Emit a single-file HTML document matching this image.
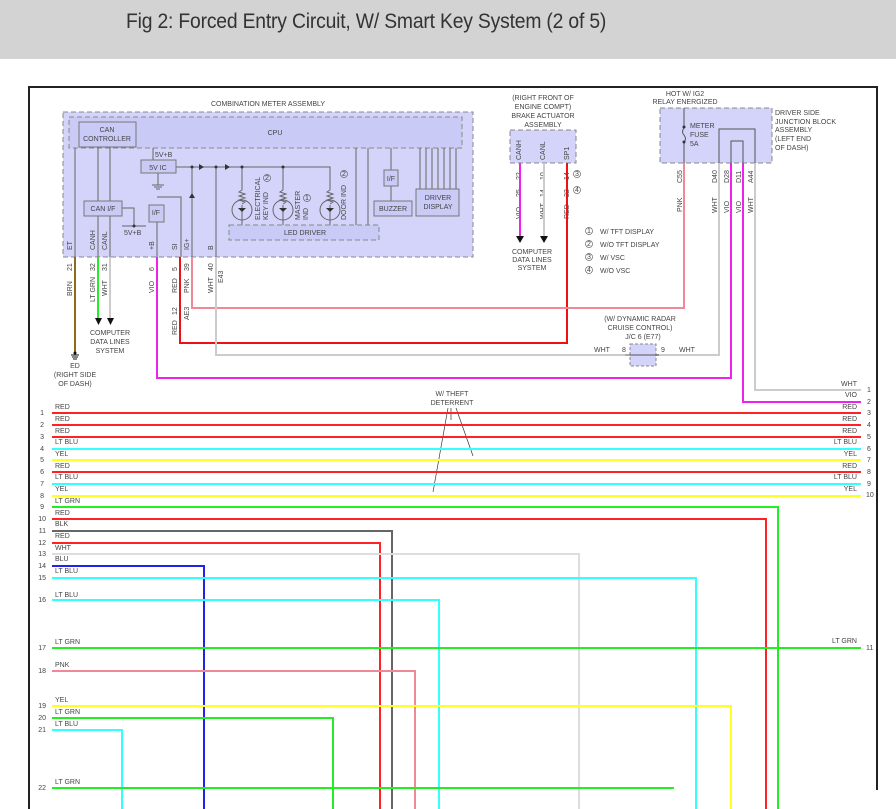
<!DOCTYPE html>
<html><head><meta charset="utf-8"><style>
html,body{margin:0;padding:0;background:#fff;width:896px;height:809px;overflow:hidden}
.hd{position:absolute;left:0;top:0;width:896px;height:59px;background:#d3d3d3}
.hd span{position:absolute;left:126px;top:10px;font-family:"Liberation Sans Narrow","Liberation Sans",sans-serif;font-size:21px;color:#333;letter-spacing:-0.2px;transform:scaleX(0.92);transform-origin:0 0;white-space:nowrap}
svg{position:absolute;left:0;top:0}
text{font-family:"Liberation Sans",sans-serif;font-size:7px;fill:#444}
</style></head><body>
<div class="hd"><span>Fig 2: Forced Entry Circuit, W/ Smart Key System (2 of 5)</span></div>
<svg width="896" height="809" viewBox="0 0 896 809">
<path d="M29 809V87H877V790" fill="none" stroke="#222" stroke-width="2"/>
<text x="268" y="106" text-anchor="middle">COMBINATION METER ASSEMBLY</text>
<rect x="63" y="112" width="410" height="145" fill="#d4d4fa" stroke="#888" stroke-dasharray="5,3"/>
<rect x="69" y="117" width="393" height="31" fill="#cacaf6" stroke="#888" stroke-dasharray="5,3"/>
<text x="275" y="135" text-anchor="middle">CPU</text>
<rect x="79" y="122" width="57" height="25" fill="#cacaf6" stroke="#777"/>
<text x="107" y="132" text-anchor="middle">CAN</text><text x="107" y="141" text-anchor="middle">CONTROLLER</text>
<rect x="510" y="130" width="66" height="33" fill="#d4d4fa" stroke="#888" stroke-dasharray="5,3"/>
<rect x="660" y="108" width="112" height="55" fill="#d4d4fa" stroke="#888" stroke-dasharray="5,3"/>
<g stroke="#666" fill="none" stroke-width="1">
<path d="M75 148V257M98 147V257M110 147V257"/>
<path d="M122 208H134V226M122 226H146"/>
<path d="M153 148V160M158 173V185M152 185h12M154 187h8M156 189h4"/>
<path d="M176 167H330V190M242 167V190M283 167V190"/>
<path d="M192 167V257M216 167V257"/>
<path d="M157 222V257M157 197H181V257"/>
<path d="M242 205V225M283 205V225M330 205V225"/>
<path d="M356 148V225M368 148V225"/>
<path d="M391 148V170M391 186V201"/>
<path d="M420 148V189M426 148V189M432 148V189M438 148V189M444 148V189M450 148V189M456 148V189"/>
<path d="M242 190l-3 2 6 2-6 2 6 2-6 2 6 2-3 2M283 190l-3 2 6 2-6 2 6 2-6 2 6 2-3 2M330 190l-3 2 6 2-6 2 6 2-6 2 6 2-3 2"/>
<circle cx="242" cy="210" r="10"/><circle cx="283" cy="210" r="10"/><circle cx="330" cy="210" r="10"/>
</g>
<g fill="#333"><circle cx="192" cy="167" r="1.5"/><circle cx="216" cy="167" r="1.5"/><circle cx="242" cy="167" r="1.5"/><circle cx="283" cy="167" r="1.5"/><circle cx="134" cy="226" r="1.5"/>
<path d="M199 164v6l5-3zM225 164v6l5-3zM189 198h6l-3-5z"/><path d="M238 208h8l-4 4zM279 208h8l-4 4zM326 208h8l-4 4z"/></g>
<rect x="141" y="160" width="35" height="13" fill="#cacaf6" stroke="#777"/><text x="158" y="170" text-anchor="middle">5V IC</text>
<text x="155" y="157">5V+B</text>
<rect x="84" y="201" width="38" height="15" fill="#cacaf6" stroke="#777"/><text x="103" y="211" text-anchor="middle">CAN I/F</text>
<text x="124" y="235">5V+B</text>
<rect x="149" y="205" width="15" height="17" fill="#cacaf6" stroke="#777"/><text x="156" y="215" text-anchor="middle">I/F</text>
<rect x="229" y="225" width="150" height="15" fill="#cacaf6" stroke="#888" stroke-dasharray="5,3"/><text x="305" y="235" text-anchor="middle">LED DRIVER</text>
<rect x="384" y="170" width="14" height="16" fill="#cacaf6" stroke="#777"/><text x="391" y="181" text-anchor="middle">I/F</text>
<rect x="374" y="201" width="38" height="15" fill="#cacaf6" stroke="#777"/><text x="393" y="211" text-anchor="middle">BUZZER</text>
<rect x="416" y="189" width="43" height="27" fill="#cacaf6" stroke="#777"/><text x="438" y="200" text-anchor="middle">DRIVER</text><text x="438" y="209" text-anchor="middle">DISPLAY</text>
<g transform="rotate(-90)">
<text x="-220" y="260">ELECTRICAL</text><text x="-220" y="268">KEY IND</text>
<text x="-220" y="300">MASTER</text><text x="-220" y="308">IND</text>
<text x="-220" y="346">DOOR IND</text>
<text x="-250" y="72">ET</text><text x="-250" y="95">CANH</text><text x="-250" y="107">CANL</text>
<text x="-250" y="154">+B</text><text x="-250" y="177">SI</text><text x="-250" y="189">IG+</text><text x="-250" y="213">B</text>
<text x="-271" y="72">21</text><text x="-271" y="95">32</text><text x="-271" y="107">31</text><text x="-271" y="154">6</text><text x="-271" y="177">5</text><text x="-271" y="189">39</text><text x="-271" y="213">40</text>
<text x="-296" y="72">BRN</text><text x="-302" y="95">LT GRN</text><text x="-296" y="107">WHT</text><text x="-293" y="154">VIO</text><text x="-293" y="177">RED</text><text x="-293" y="189">PNK</text><text x="-293" y="213">WHT</text>
<text x="-283" y="223">E43</text>
<text x="-335" y="177">RED</text><text x="-315" y="177">12</text><text x="-320" y="189">AE3</text>
<text x="-160" y="521">CANH</text><text x="-160" y="545">CANL</text><text x="-160" y="569">SP1</text>
<text x="-180" y="521">22</text><text x="-180" y="545">10</text><text x="-180" y="569">14</text>
<text x="-197" y="521">25</text><text x="-197" y="545">14</text><text x="-197" y="569">22</text>
<text x="-219" y="521">VIO</text><text x="-219" y="545">WHT</text><text x="-219" y="569">RED</text>
<text x="-183" y="682">C55</text><text x="-212" y="682">PNK</text>
<text x="-183" y="717">D40</text><text x="-183" y="729">D28</text><text x="-183" y="741">D11</text><text x="-183" y="753">A44</text>
<text x="-213" y="717">WHT</text><text x="-213" y="729">VIO</text><text x="-213" y="741">VIO</text><text x="-213" y="753">WHT</text>
</g>
<g fill="none" stroke="#666" stroke-width="0.7"><circle cx="267" cy="178" r="3.5"/><circle cx="307" cy="198" r="3.5"/><circle cx="344" cy="174" r="3.5"/></g>
<text x="265" y="180" font-size="5">2</text><text x="305" y="200" font-size="5">1</text><text x="342" y="176" font-size="5">2</text>
<text x="543" y="100" text-anchor="middle">(RIGHT FRONT OF</text><text x="543" y="109" text-anchor="middle">ENGINE COMPT)</text>
<text x="543" y="118" text-anchor="middle">BRAKE ACTUATOR</text><text x="543" y="127" text-anchor="middle">ASSEMBLY</text>
<text x="532" y="254" text-anchor="middle">COMPUTER</text><text x="532" y="262" text-anchor="middle">DATA LINES</text><text x="532" y="270" text-anchor="middle">SYSTEM</text>
<g fill="none" stroke="#666" stroke-width="0.7"><circle cx="577" cy="174" r="3.5"/><circle cx="577" cy="190" r="3.5"/>
<circle cx="589" cy="231" r="3.5"/><circle cx="589" cy="244" r="3.5"/><circle cx="589" cy="257" r="3.5"/><circle cx="589" cy="270" r="3.5"/></g>
<text x="575" y="176" font-size="5">3</text><text x="575" y="192" font-size="5">4</text>
<text x="587" y="233" font-size="5">1</text><text x="587" y="246" font-size="5">2</text><text x="587" y="259" font-size="5">3</text><text x="587" y="272" font-size="5">4</text>
<text x="600" y="234">W/ TFT DISPLAY</text><text x="600" y="247">W/O TFT DISPLAY</text><text x="600" y="260">W/ VSC</text><text x="600" y="273">W/O VSC</text>
<text x="685" y="96" text-anchor="middle">HOT W/ IG2</text><text x="685" y="104" text-anchor="middle">RELAY ENERGIZED</text>
<text x="775" y="115">DRIVER SIDE</text><text x="775" y="124">JUNCTION BLOCK</text><text x="775" y="132">ASSEMBLY</text><text x="775" y="141">(LEFT END</text><text x="775" y="150">OF DASH)</text>
<text x="690" y="128">METER</text><text x="690" y="137">FUSE</text><text x="690" y="146">5A</text>
<g fill="none" stroke="#555"><path d="M684 108V128q-3 4 0 7q3 4 0 7V163M719 163V129H755V163M731 163V141H743V163"/></g>
<circle cx="684" cy="127" r="1.5" fill="#333"/><circle cx="684" cy="142" r="1.5" fill="#333"/>
<g fill="none" stroke-width="2">
<path d="M75 257V352" stroke="#8a6d1a"/>
<path d="M98 257V318" stroke="#22ee22"/>
<path d="M110 257V318" stroke="#ccc"/>
<path d="M157 257V378H731V163" stroke="#ee22ee"/>
<path d="M180 257V343H567V163" stroke="#ee1111"/>
<path d="M192 257V308H684V163" stroke="#f08898"/>
<path d="M216 257V355H625M637 355H719V163" stroke="#ccc"/>
<path d="M520 163V236" stroke="#ee22ee"/>
<path d="M544 163V236" stroke="#ccc"/>
<path d="M743 163V402H861" stroke="#ee22ee"/>
<path d="M755 163V390H861" stroke="#ccc"/>
</g>
<g fill="#111"><path d="M95 318h7l-3.5 7zM107 318h7l-3.5 7zM516 236h8l-4 7zM540 236h8l-4 7z"/>
<path d="M71 355h8M72 357h6M73 359h4" stroke="#111"/><circle cx="75" cy="353" r="1.5"/></g>
<text x="110" y="335" text-anchor="middle">COMPUTER</text><text x="110" y="344" text-anchor="middle">DATA LINES</text><text x="110" y="353" text-anchor="middle">SYSTEM</text>
<text x="75" y="368" text-anchor="middle">ED</text><text x="75" y="377" text-anchor="middle">(RIGHT SIDE</text><text x="75" y="386" text-anchor="middle">OF DASH)</text>
<text x="640" y="321" text-anchor="middle">(W/ DYNAMIC RADAR</text><text x="640" y="330" text-anchor="middle">CRUISE CONTROL)</text><text x="643" y="339" text-anchor="middle">J/C 6 (E77)</text>
<rect x="630" y="344" width="26" height="22" fill="#d4d4fa" stroke="#888" stroke-dasharray="3,2"/>
<text x="594" y="352">WHT</text><text x="622" y="352">8</text><text x="661" y="352">9</text><text x="679" y="352">WHT</text>
<path d="M625 355H659" stroke="#555" fill="none"/>
<text x="452" y="396" text-anchor="middle">W/ THEFT</text><text x="452" y="405" text-anchor="middle">DETERRENT</text>
<path d="M448 408L433 492M451 408V420M456 408L473 456" stroke="#333" fill="none" stroke-width="0.7"/>
<g fill="none" stroke-width="2">
<path d="M52 413H861" stroke="#ff2222"/><path d="M52 425H861" stroke="#ff2222"/><path d="M52 437H861" stroke="#ff2222"/>
<path d="M52 449H861" stroke="#33ffff"/><path d="M52 460H861" stroke="#ffff22"/><path d="M52 472H861" stroke="#ff2222"/>
<path d="M52 484H861" stroke="#33ffff"/><path d="M52 496H861" stroke="#ffff22"/>
<path d="M52 507H778V809" stroke="#22ee22"/><path d="M52 519H766V809" stroke="#ff2222"/>
<path d="M52 531H392V809" stroke="#666"/><path d="M52 543H380V809" stroke="#ff2222"/>
<path d="M52 554H579V809" stroke="#ddd"/><path d="M52 566H204V809" stroke="#2222ee"/>
<path d="M52 578H696V809" stroke="#33ffff"/><path d="M52 600H439V809" stroke="#33ffff"/>
<path d="M52 648H861" stroke="#22ee22"/><path d="M52 671H415V809" stroke="#f08898"/>
<path d="M52 706H731V809" stroke="#ffff22"/><path d="M52 718H333V809" stroke="#22ee22"/>
<path d="M52 730H122V809" stroke="#33ffff"/><path d="M52 788H674" stroke="#22ee22"/>
</g>
<g text-anchor="end">
<text x="44" y="415">1</text><text x="44" y="427">2</text><text x="44" y="439">3</text><text x="44" y="451">4</text><text x="44" y="462">5</text><text x="44" y="474">6</text><text x="44" y="486">7</text><text x="44" y="498">8</text><text x="44" y="509">9</text><text x="46" y="521">10</text><text x="46" y="533">11</text><text x="46" y="545">12</text><text x="46" y="556">13</text><text x="46" y="568">14</text><text x="46" y="580">15</text><text x="46" y="602">16</text><text x="46" y="650">17</text><text x="46" y="673">18</text><text x="46" y="708">19</text><text x="46" y="720">20</text><text x="46" y="732">21</text><text x="46" y="790">22</text>
<text x="857" y="386">WHT</text><text x="857" y="397">VIO</text><text x="857" y="409">RED</text><text x="857" y="421">RED</text><text x="857" y="433">RED</text><text x="857" y="444">LT BLU</text><text x="857" y="456">YEL</text><text x="857" y="468">RED</text><text x="857" y="479">LT BLU</text><text x="857" y="491">YEL</text><text x="857" y="643">LT GRN</text>
</g>
<g><text x="867" y="392">1</text><text x="867" y="404">2</text><text x="867" y="415">3</text><text x="867" y="427">4</text><text x="867" y="439">5</text><text x="867" y="451">6</text><text x="867" y="462">7</text><text x="867" y="474">8</text><text x="867" y="486">9</text><text x="866" y="497">10</text><text x="866" y="650">11</text></g>
<g>
<text x="55" y="409">RED</text><text x="55" y="421">RED</text><text x="55" y="433">RED</text><text x="55" y="444">LT BLU</text><text x="55" y="456">YEL</text><text x="55" y="468">RED</text><text x="55" y="479">LT BLU</text><text x="55" y="491">YEL</text><text x="55" y="503">LT GRN</text><text x="55" y="515">RED</text><text x="55" y="526">BLK</text><text x="55" y="538">RED</text><text x="55" y="550">WHT</text><text x="55" y="561">BLU</text><text x="55" y="573">LT BLU</text><text x="55" y="597">LT BLU</text><text x="55" y="644">LT GRN</text><text x="55" y="667">PNK</text><text x="55" y="702">YEL</text><text x="55" y="714">LT GRN</text><text x="55" y="726">LT BLU</text><text x="55" y="784">LT GRN</text>
</g>
</svg>
</body></html>
